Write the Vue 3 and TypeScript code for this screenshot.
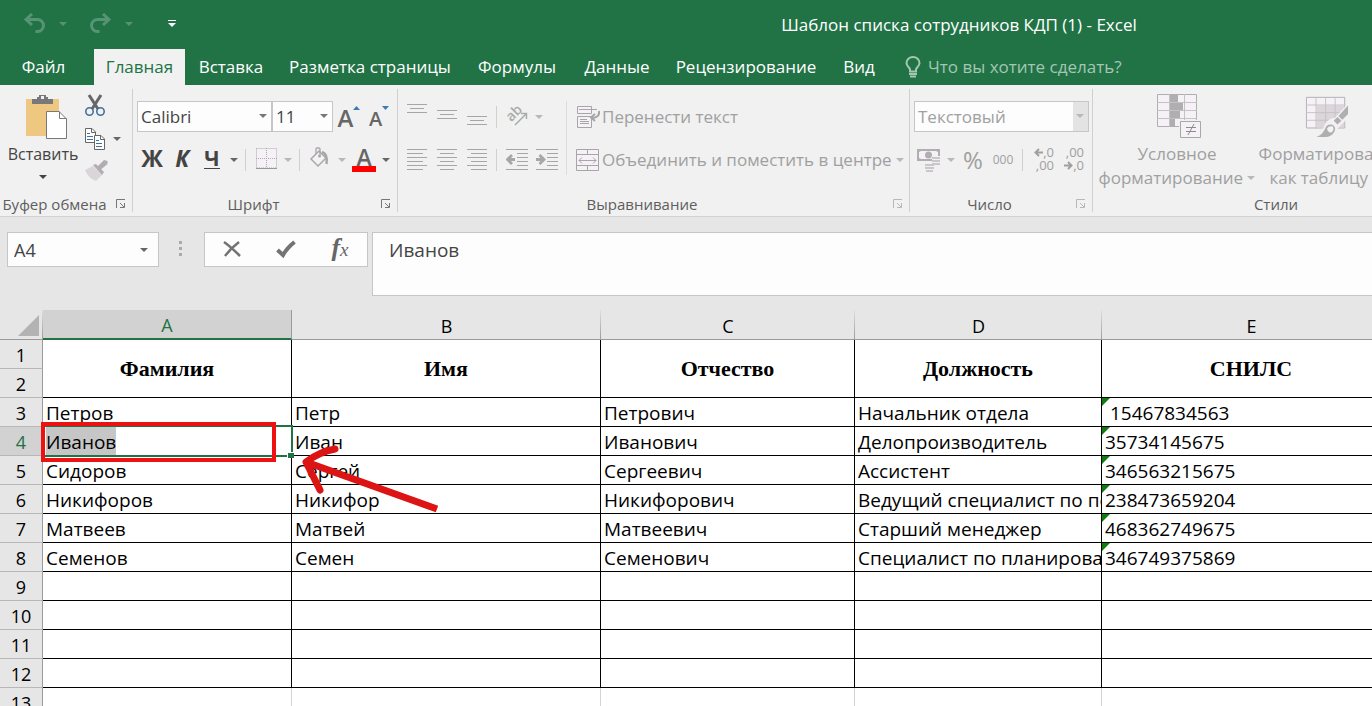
<script setup lang="ts">
import { ref } from 'vue'

interface Column {
  letter: string
  title: string
}
interface SheetRow {
  number: number
  cells: string[]
}

const documentTitle = 'Шаблон списка сотрудников КДП (1) - Excel'
const tabs: string[] = ['Файл', 'Главная', 'Вставка', 'Разметка страницы', 'Формулы', 'Данные', 'Рецензирование', 'Вид']
const activeTab = ref('Главная')
const fontName = ref('Calibri')
const fontSize = ref('11')
const numberFormat = ref('Текстовый')
const cellName = ref('A4')
const formula = ref('Иванов')

const columns: Column[] = [
  { letter: 'A', title: 'Фамилия' },
  { letter: 'B', title: 'Имя' },
  { letter: 'C', title: 'Отчество' },
  { letter: 'D', title: 'Должность' },
  { letter: 'E', title: 'СНИЛС' },
]

const rows: SheetRow[] = [
  { number: 3, cells: ['Петров', 'Петр', 'Петрович', 'Начальник отдела', '\u00a015467834563'] },
  { number: 4, cells: ['Иванов', 'Иван', 'Иванович', 'Делопроизводитель', '35734145675'] },
  { number: 5, cells: ['Сидоров', 'Сергей', 'Сергеевич', 'Ассистент', '346563215675'] },
  { number: 6, cells: ['Никифоров', 'Никифор', 'Никифорович', 'Ведущий специалист по персоналу', '238473659204'] },
  { number: 7, cells: ['Матвеев', 'Матвей', 'Матвеевич', 'Старший менеджер', '468362749675'] },
  { number: 8, cells: ['Семенов', 'Семен', 'Семенович', 'Специалист по планированию', '346749375869'] },
  ...[9, 10, 11, 12, 13].map((number) => ({ number, cells: ['', '', '', '', ''] })),
]

const isActive = (row: number, col: number): boolean => row === 4 && col === 0
const leftLines = [1, 5, 9, 13, 17, 21]
</script>

<template>
  <div class="app">
    <header class="titlebar">
      <div class="quick">
        <button class="quick-btn" aria-label="Отменить">
          <svg width="23" height="21" viewBox="0 0 23 21" fill="none" stroke="currentColor">
            <path d="M3 6.500H14.500a6 6 0 0 1 0 12H12.500" stroke-width="3" />
            <path d="M9 1L3 6.500L9 12" stroke-width="3" />
          </svg>
        </button>
        <button class="quick-arrow" aria-label="Список отмены"><i class="caret"></i></button>
        <button class="quick-btn" aria-label="Повторить">
          <svg width="23" height="21" viewBox="0 0 23 21" fill="none" stroke="currentColor">
            <path d="M20 6.500H8.500a6 6 0 0 0 0 12H10.500" stroke-width="3" />
            <path d="M14 1L20 6.500L14 12" stroke-width="3" />
          </svg>
        </button>
        <button class="quick-arrow" aria-label="Список повтора"><i class="caret"></i></button>
        <button class="quick-more" aria-label="Настройка панели">
          <svg width="8" height="8" viewBox="0 0 8 8" fill="currentColor">
            <path d="M0 0H8V1H0zM0 3H8L4 7z" />
          </svg>
        </button>
      </div>
      <h1>{{ documentTitle }}</h1>
    </header>

    <nav class="tabs">
      <button v-for="tab in tabs" :key="tab" class="tab" :class="{ active: tab === activeTab }" @click="activeTab = tab">
        {{ tab }}
      </button>
      <label class="tell-me">
        <svg width="16" height="22" viewBox="0 0 16 22" fill="none" stroke="currentColor" stroke-width="2">
          <path d="M5 15.500V13.500C5 11.500 1.500 10.500 1.500 7A6.500 6 0 0 1 14.500 7C14.500 10.500 11 11.500 11 13.500V15.500z" />
          <path d="M4 18H12M5 20.500H11" />
        </svg>
        <input type="text" placeholder="Что вы хотите сделать?" aria-label="Что вы хотите сделать?" />
      </label>
    </nav>

    <section class="ribbon">
      <div class="group clipboard">
        <div class="group-body">
          <button class="paste">
            <svg width="42" height="46" viewBox="0 0 42 46">
              <path d="M0 5H33V42H0z" fill="#eec881" />
              <path d="M6 10V5H11V3H13V1H20V3H22V5H27V10z" fill="#787878" />
              <path d="M15 2H18V5H15z" fill="#f1f1f1" />
              <path d="M20.500 17.500H33L40.500 25V44.500H20.500z" fill="#fff" stroke="#787878" />
              <path d="M33.500 17.500V24.500H40.500" fill="none" stroke="#787878" />
            </svg>
            <span>Вставить</span>
            <i class="caret"></i>
          </button>
          <div class="clip-tools">
            <button class="icon-btn" aria-label="Вырезать">
              <svg width="20" height="24" viewBox="0 0 20 24" fill="none">
                <path d="M4 1L13 15M16 1L7 15" stroke="#666" stroke-width="3" />
                <circle cx="4.500" cy="17.500" r="3.700" stroke="#41719c" stroke-width="1.600" />
                <circle cx="15.500" cy="17.500" r="3.700" stroke="#41719c" stroke-width="1.600" />
              </svg>
            </button>
            <div class="copy">
              <button class="icon-btn" aria-label="Копировать">
                <svg width="20" height="22" viewBox="0 0 20 22" fill="#fff" stroke="#666">
                  <path d="M.5.500H7L10.500 4V14.500H.5z" />
                  <path d="M6.500.500V4.500H10.500" fill="none" />
                  <path d="M2 5.500H5M2 8.500H8M2 11.500H8" stroke="#41719c" />
                  <path d="M9.500 7.500H16L19.500 11V21.500H9.500z" />
                  <path d="M15.500 7.500V11.500H19.500" fill="none" />
                  <path d="M11 12.500H14M11 15.500H17M11 18.500H17" stroke="#41719c" />
                </svg>
              </button>
              <button class="arrow-btn" aria-label="Варианты копирования"><i class="caret"></i></button>
            </div>
            <button class="icon-btn" aria-label="Формат по образцу">
              <svg width="24" height="22" viewBox="0 0 24 22">
                <path d="M0 10L8 6L17 15L11 21Q3 18 0 10z" fill="#d9d5d9" />
                <path d="M8 5L11 4L19 12L17 15zM13 6L19 0L22.500 1V4L16 9.500z" fill="#b0aeb0" />
              </svg>
            </button>
          </div>
        </div>
        <footer><span>Буфер обмена</span>
          <button class="launcher" aria-label="Параметры буфера обмена">
            <svg width="10" height="10" viewBox="0 0 10 10" fill="none" stroke="currentColor"><path d="M.5 9V.5H9M4 4L8 8M8.500 4V8.500H4" /></svg>
          </button>
        </footer>
      </div>

      <div class="group font">
        <div class="group-body">
          <div class="row">
            <span class="combo name"><select v-model="fontName" aria-label="Шрифт"><option>Calibri</option></select><i class="caret"></i></span>
            <span class="combo size"><select v-model="fontSize" aria-label="Размер шрифта"><option>11</option></select><i class="caret"></i></span>
            <button class="btn grow" aria-label="Увеличить размер шрифта"><b>A</b><svg width="7" height="4" viewBox="0 0 7 4"><path d="M0 4L3.500 0L7 4z" fill="#3f7ab5" /></svg></button>
            <button class="btn shrink" aria-label="Уменьшить размер шрифта"><b>A</b><svg width="7" height="4" viewBox="0 0 7 4"><path d="M0 0L3.500 4L7 0z" fill="#3f7ab5" /></svg></button>
          </div>
          <div class="row">
            <button class="btn style">Ж</button>
            <button class="btn style italic">К</button>
            <button class="btn style under"><span>Ч</span></button>
            <button class="arrow-btn" aria-label="Вид подчёркивания"><i class="caret"></i></button>
            <i class="sep"></i>
            <button class="btn" aria-label="Границы">
              <svg width="21" height="24" viewBox="0 0 21 24" fill="#f6f1f6" stroke="#aaa">
                <path d="M.5.500H20.500V20H.5zM10.500 0V20M0 10.500H21" stroke-dasharray="1 1" />
                <path d="M0 20.500H21" stroke="#999" />
              </svg>
            </button>
            <button class="arrow-btn dim" aria-label="Виды границ"><i class="caret"></i></button>
            <i class="sep"></i>
            <button class="btn" aria-label="Цвет заливки">
              <svg width="20" height="25" viewBox="0 0 20 25" fill="none" stroke="#a9a7a9">
                <path d="M1 12L9 4L16 11L8 19z" fill="#f6f1f6" stroke-width="1.500" />
                <path d="M6 7V2Q6 1 7 1H9Q10 1 10 2V9" stroke-width="1.300" />
                <path d="M12 5Q18 7 16.500 17" stroke-width="2.500" />
                <circle cx="9.500" cy="9" r="1.500" fill="#a9a7a9" stroke="none" />
              </svg>
            </button>
            <button class="arrow-btn dim" aria-label="Варианты заливки"><i class="caret"></i></button>
            <button class="btn color" aria-label="Цвет текста"><b>A</b></button>
            <button class="arrow-btn" aria-label="Варианты цвета текста"><i class="caret"></i></button>
          </div>
        </div>
        <footer><span>Шрифт</span>
          <button class="launcher" aria-label="Параметры шрифта">
            <svg width="10" height="10" viewBox="0 0 10 10" fill="none" stroke="currentColor"><path d="M.5 9V.5H9M4 4L8 8M8.500 4V8.500H4" /></svg>
          </button>
        </footer>
      </div>

      <div class="group align">
        <div class="group-body">
          <div class="align-left">
            <div class="row">
              <button class="btn" aria-label="По верхнему краю"><svg width="20" height="28" viewBox="0 0 20 28" stroke="#a6a6a6"><path d="M0 1.500H20M3 5.500H17M0 9.500H20" /></svg></button>
              <button class="btn" aria-label="По середине"><svg width="20" height="28" viewBox="0 0 20 28" stroke="#a6a6a6"><path d="M0 7.500H20M3 11.500H17M0 15.500H20" /></svg></button>
              <button class="btn" aria-label="По нижнему краю"><svg width="20" height="28" viewBox="0 0 20 28" stroke="#a6a6a6"><path d="M0 13.500H20M3 17.500H17M0 21.500H20" /></svg></button>
              <i class="sep"></i>
              <button class="btn" aria-label="Ориентация">
                <svg width="22" height="26" viewBox="0 0 22 26" fill="none" stroke="#aaa">
                  <text x="1" y="16" transform="rotate(-45 6 12)" class="ab">ab</text>
                  <path d="M9 21L20 10M15 9.500H20.500V15" stroke-width="1.500" />
                </svg>
              </button>
              <button class="arrow-btn dim" aria-label="Варианты ориентации"><i class="caret"></i></button>
            </div>
            <div class="row">
              <button class="btn" aria-label="По левому краю">
                <svg width="20" height="24" viewBox="0 0 20 24" fill="#a6a6a6"><rect v-for="(y, i) in leftLines" :key="y" x="0" :y="y" :width="i % 2 ? 16 : 20" height="1" /></svg>
              </button>
              <button class="btn" aria-label="По центру">
                <svg width="20" height="24" viewBox="0 0 20 24" fill="#a6a6a6"><rect v-for="(y, i) in leftLines" :key="y" :x="i % 2 ? 3 : 0" :y="y" :width="i % 2 ? 14 : 20" height="1" /></svg>
              </button>
              <button class="btn" aria-label="По правому краю">
                <svg width="20" height="24" viewBox="0 0 20 24" fill="#a6a6a6"><rect v-for="(y, i) in leftLines" :key="y" :x="i % 2 ? 4 : 0" :y="y" :width="i % 2 ? 16 : 20" height="1" /></svg>
              </button>
              <i class="sep"></i>
              <button class="btn" aria-label="Уменьшить отступ">
                <svg width="23" height="24" viewBox="0 0 23 24" stroke="#a6a6a6" fill="none">
                  <path d="M0 1.500H22M11 5.500H22M11 9.500H22M11 13.500H22M11 17.500H22M0 21.500H22" />
                  <path d="M9 11.500H2M6 7L1.500 11.500L6 16" stroke-width="2.800" />
                </svg>
              </button>
              <button class="btn" aria-label="Увеличить отступ">
                <svg width="23" height="24" viewBox="0 0 23 24" stroke="#a6a6a6" fill="none">
                  <path d="M0 1.500H22M11 5.500H22M11 9.500H22M11 13.500H22M11 17.500H22M0 21.500H22" />
                  <path d="M0 11.500H7M3.500 7L8 11.500L3.500 16" stroke-width="2.800" />
                </svg>
              </button>
            </div>
          </div>
          <i class="tall-sep"></i>
          <div class="align-right">
            <button class="text-btn">
              <svg width="24" height="24" viewBox="0 0 24 24" fill="#f6f1f6" stroke="#a6a6a6">
                <path d="M1.500 1.500H15.500V8.500H1.500zM1.500 11.500H15.500V22.500H1.500z" />
                <path d="M3 4.500H21M4 14.500H11M4 16.500H13M4 18.500H13" />
                <path d="M23 6Q24 13 15 13M19 9L15 12.500L19 16" fill="none" stroke-width="2" />
              </svg>
              <span>Перенести текст</span>
            </button>
            <button class="text-btn">
              <svg width="24" height="24" viewBox="0 0 24 24" fill="#f6f1f6" stroke="#a6a6a6">
                <path d="M.5 1.500H22.500V22.500H.5zM.5 6.500H22.500M.5 17.500H22.500M11.500 1V6M11.500 18V23" />
                <path d="M3 12.500H20M6 9.500L3 12.500L6 15.500M17 9.500L20 12.500L17 15.500" fill="none" />
              </svg>
              <span>Объединить и поместить в центре</span>
              <i class="caret"></i>
            </button>
          </div>
        </div>
        <footer><span>Выравнивание</span>
          <button class="launcher dim" aria-label="Параметры выравнивания">
            <svg width="10" height="10" viewBox="0 0 10 10" fill="none" stroke="currentColor"><path d="M.5 9V.5H9M4 4L8 8M8.500 4V8.500H4" /></svg>
          </button>
        </footer>
      </div>

      <div class="group number">
        <div class="group-body">
          <div class="row">
            <span class="combo format"><select v-model="numberFormat" aria-label="Числовой формат"><option>Текстовый</option></select><i class="caret"></i></span>
          </div>
          <div class="row">
            <button class="btn" aria-label="Финансовый формат">
              <svg width="24" height="24" viewBox="0 0 24 24">
                <path d="M0 1H23V13H0z" fill="#b0aeb0" />
                <path d="M2 4L4 3H19L21 4V10L19 11H4L2 10z" fill="#f6f1f6" />
                <circle cx="11.500" cy="7" r="3.500" fill="#b0aeb0" />
                <path d="M15 8H23V17H17V22H8V14H15z" fill="#f1f1f1" />
                <path d="M15 10H23M15 13H23M15 16H23M8 17H17M8 20H17M9 23H16" stroke="#cbc6cb" stroke-width="2" />
              </svg>
            </button>
            <button class="arrow-btn dim" aria-label="Валюты"><i class="caret"></i></button>
            <button class="btn percent">%</button>
            <button class="btn thousands">000</button>
            <i class="sep"></i>
            <button class="btn decimals" aria-label="Увеличить разрядность">
              <span><svg width="9" height="9" viewBox="0 0 9 9" fill="none" stroke="#a0a0a0" stroke-width="2"><path d="M9 4.500H1.500M5 1L1.500 4.500L5 8" /></svg>,0</span><span>,00</span>
            </button>
            <button class="btn decimals" aria-label="Уменьшить разрядность">
              <span>,00</span><span><svg width="9" height="9" viewBox="0 0 9 9" fill="none" stroke="#a0a0a0" stroke-width="2"><path d="M0 4.500H7.500M4 1L7.500 4.500L4 8" /></svg>,0</span>
            </button>
          </div>
        </div>
        <footer><span>Число</span>
          <button class="launcher dim" aria-label="Параметры числа">
            <svg width="10" height="10" viewBox="0 0 10 10" fill="none" stroke="currentColor"><path d="M.5 9V.5H9M4 4L8 8M8.500 4V8.500H4" /></svg>
          </button>
        </footer>
      </div>

      <div class="group styles">
        <div class="group-body">
          <button class="big-btn">
            <svg width="44" height="44" viewBox="0 0 44 44">
              <path d="M.5.500H39.500V32.500H.5z" fill="#f6f1f6" stroke="#b0aeb0" />
              <path d="M0 8.500H40M0 16.500H40M0 24.500H40M12.500 0V33M27.500 0V33" stroke="#c4c2c4" />
              <path d="M13 1H21V8H13zM13 9H26V16H13zM13 17H23V24H13zM13 25H18V32H13z" fill="#b0aeb0" />
              <path d="M22 26H44V44H22z" fill="#f1f1f1" />
              <path d="M23.500 27.500H43.500V43.500H23.500z" fill="#f6f1f6" stroke="#a9a7a9" />
              <path d="M29 33.500H39M29 37.500H39M37 30L31 41" stroke="#8c8c8c" />
            </svg>
            <span>Условное<br />форматирование <i class="caret"></i></span>
          </button>
          <button class="big-btn table-style">
            <svg width="44" height="46" viewBox="0 0 44 46">
              <path d="M.5 3.500H40.500V35.500H.5z" fill="#f6f1f6" stroke="#b0aeb0" />
              <path d="M11 12H40V35H11z" fill="#dcd6dc" />
              <path d="M0 11.500H41M0 19.500H41M0 27.500H41M10.500 3V36M20.500 3V36M30.500 3V36" stroke="#c4c2c4" />
              <path d="M44 10L30 25Q24 25 20 31Q17 40 9 43V46H22Q32 44 33 36L44 25z" fill="#f1f1f1" />
              <path d="M44 12V21L38 27L34 23zM33 24L37 28L33 32L29 28zM11 45Q18 42 20 36Q22 31 27 32Q32 34 30 39Q27 45 20 45z" fill="#b0aeb0" />
              <path d="M22 36Q24 33 28 34Q30 37 27 40Q23 41 22 36z" fill="#f6f1f6" />
            </svg>
            <span>Форматировать<br />как таблицу <i class="caret"></i></span>
          </button>
        </div>
        <footer><span>Стили</span></footer>
      </div>
    </section>

    <section class="formula-bar">
      <div class="name-box">
        <input v-model="cellName" type="text" aria-label="Имя ячейки" />
        <button class="arrow-btn" aria-label="Список имён"><i class="caret"></i></button>
      </div>
      <div class="dots"><i></i><i></i><i></i></div>
      <div class="entry">
        <button aria-label="Отмена">
          <svg width="18" height="20" viewBox="0 0 18 20" fill="none" stroke="#737373"><path d="M1 2Q8 7 17 16M16 2Q8 8 2 16" stroke-width="2.500" /></svg>
        </button>
        <button aria-label="Ввод">
          <svg width="20" height="20" viewBox="0 0 20 20" fill="none" stroke="#737373"><path d="M1.500 10L7 15Q11 8 18.500 2" stroke-width="4" /></svg>
        </button>
        <button class="fx" aria-label="Вставить функцию">f<small>x</small></button>
      </div>
      <textarea v-model="formula" aria-label="Строка формул"></textarea>
    </section>

    <main class="sheet">
      <table>
        <colgroup>
          <col class="c-num" /><col class="c-a" /><col class="c-b" /><col class="c-c" /><col class="c-d" /><col class="c-e" />
        </colgroup>
        <thead>
          <tr>
            <th class="corner"><svg width="21" height="21" viewBox="0 0 21 21"><path d="M21 0V21H0z" fill="#b3b3b3" /></svg></th>
            <th v-for="(c, i) in columns" :key="c.letter" scope="col" class="letter" :class="{ current: i === 0 }">{{ c.letter }}</th>
          </tr>
        </thead>
        <tbody>
          <tr>
            <th scope="row" class="num">1</th>
            <td v-for="c in columns" :key="c.letter" rowspan="2" class="title">{{ c.title }}</td>
          </tr>
          <tr><th scope="row" class="num">2</th></tr>
          <tr v-for="r in rows" :key="r.number" :class="{ plain: r.number > 12 }">
            <th scope="row" class="num" :class="{ current: r.number === 4 }">{{ r.number }}</th>
            <td v-for="(text, i) in r.cells" :key="i" :class="{ active: isActive(r.number, i), flagged: i === 4 && text }">
              <template v-if="isActive(r.number, i)">
                <mark>{{ text }}</mark>
                <i class="selection"></i>
                <i class="handle"></i>
                <i class="frame"></i>
                <svg class="pointer" width="140" height="72" viewBox="0 0 140 72" fill="none" stroke="#dd1414">
                  <path d="M7 20L138 67" stroke-width="7" />
                  <path d="M36 7Q20 10 7 20L21 48" stroke-width="7" stroke-linecap="round" stroke-linejoin="round" />
                </svg>
              </template>
              <template v-else>{{ text }}</template>
            </td>
          </tr>
        </tbody>
      </table>
    </main>
  </div>
</template>

<style>
html,
body {
  margin: 0;
  overflow: hidden;
}
</style>

<style scoped>
* {
  box-sizing: border-box;
}
.app {
  display: flex;
  flex-direction: column;
  height: 100vh;
  overflow: hidden;
  background: #e6e6e6;
  color: #444;
  font-family: 'Open Sans', 'Noto Sans', sans-serif;
  font-size: 17px;
}
button,
input,
select,
textarea {
  margin: 0;
  padding: 0;
  border: 0;
  border-radius: 0;
  outline: 0;
  background: none;
  color: inherit;
  font: inherit;
}
svg {
  display: block;
  flex: none;
}
.caret {
  display: inline-block;
  flex: none;
  width: 0;
  height: 0;
  border: 4px solid transparent;
  border-top-color: currentColor;
  border-bottom-width: 0;
}

.titlebar {
  display: flex;
  align-items: center;
  flex: none;
  height: 49px;
  background: #217346;
  color: #fff;
}
.quick {
  display: flex;
  align-items: center;
  flex: none;
  width: 546px;
  padding: 0 0 2px 23px;
  color: #579473;
}
.quick-btn {
  width: 24px;
}
.quick-arrow {
  display: flex;
  justify-content: center;
  width: 42px;
  padding-right: 10px;
}
.quick-more {
  margin-left: 13px;
  color: #fff;
}
h1 {
  flex: 1;
  margin: 0;
  font-size: 17px;
  font-weight: 400;
  text-align: center;
  white-space: nowrap;
}

.tabs {
  display: grid;
  grid-template-columns: 87px 91px 92px 186px 108px 92px 166px 60px 1fr;
  flex: none;
  height: 36px;
  padding-left: 7px;
  background: #217346;
  color: #fff;
}
.tab {
  padding-bottom: 2px;
  white-space: nowrap;
}
.tab:first-child {
  padding-right: 14px;
}
.tab.active {
  background: #f1f1f1;
  color: #217346;
}
.tell-me {
  display: flex;
  align-items: center;
  gap: 7px;
  padding: 0 0 2px 16px;
  color: #a3c7b3;
}
.tell-me svg {
  margin-top: 2px;
}
.tell-me input {
  flex: 1;
  min-width: 0;
}
.tell-me input::placeholder {
  color: inherit;
  opacity: 1;
}

.ribbon {
  display: flex;
  flex: none;
  padding: 4px 0;
  overflow: hidden;
  border-bottom: 1px solid #d2d2d2;
  background: #f1f1f1;
}
.group {
  display: flex;
  flex-direction: column;
  flex: none;
  height: 123px;
  border-right: 1px solid #d0d0d0;
}
.group-body {
  display: flex;
  flex: 1;
  flex-direction: column;
  gap: 12px;
  padding: 12px 4px 0;
}
.group footer {
  display: flex;
  align-items: center;
  height: 20px;
  margin-bottom: -2px;
  color: #5e5e5e;
  font-size: 15px;
  line-height: 18px;
}
.group footer span {
  flex: 1;
  padding-left: 1px;
  text-align: center;
  white-space: nowrap;
}
.launcher {
  display: flex;
  justify-content: center;
  width: 24px;
  padding-left: 2px;
  color: #777;
}
.launcher.dim,
.dim {
  color: #b8b8b8;
}
.row {
  display: flex;
  align-items: center;
  height: 31px;
}
.btn,
.arrow-btn,
.icon-btn {
  display: flex;
  align-items: center;
  justify-content: center;
  flex: none;
}
.btn {
  width: 30px;
  height: 31px;
}
.arrow-btn {
  width: 14px;
  height: 30px;
  color: #666;
}
.arrow-btn.dim {
  color: #b8b8b8;
}
.sep {
  flex: none;
  width: 1px;
  height: 22px;
  margin: 0 5px 0 4px;
  background: #d0d0d0;
}

.clipboard {
  width: 133px;
}
.clipboard .group-body {
  flex-direction: row;
  gap: 5px;
  padding: 5px 0 0 6px;
}
.paste {
  display: flex;
  flex-direction: column;
  align-items: center;
  flex: none;
  width: 74px;
  height: 92px;
  font-size: 16px;
  line-height: 24px;
}
.paste svg {
  margin: 0 0 2px 8px;
}
.paste .caret {
  margin-top: 9px;
}
.clip-tools {
  display: flex;
  flex-direction: column;
  align-items: flex-start;
  gap: 10px;
}
.copy {
  display: flex;
  gap: 5px;
}
.copy .arrow-btn {
  height: 22px;
}

.font {
  width: 265px;
}
.combo {
  position: relative;
  flex: none;
  border: 1px solid #c6c6c6;
  background: #fdfdfd;
}
.combo select {
  width: 100%;
  height: 29px;
  padding-left: 3px;
  appearance: none;
}
.combo .caret {
  position: absolute;
  top: 12px;
  right: 4px;
  color: #777;
  pointer-events: none;
}
.name {
  width: 135px;
}
.size {
  width: 61px;
}
.format {
  width: 175px;
  background: linear-gradient(to left, #e3e3e3 15px, #fdfdfd 15px);
  color: #a0a0a0;
}
.format .caret {
  color: #b8b8b8;
}
.grow,
.shrink {
  align-items: flex-start;
  padding: 2px 0 0 2px;
  color: #666;
}
.grow b,
.shrink b {
  font-weight: 600;
  font-size: 24px;
  line-height: 30px;
}
.shrink b {
  font-size: 20px;
  line-height: 32px;
}
.grow svg,
.shrink svg {
  margin-top: 3px;
}
.style {
  padding-bottom: 4px;
  font-size: 23px;
  font-weight: 700;
  line-height: 24px;
}
.italic {
  font-style: italic;
}
.under span {
  height: 22px;
  border-bottom: 1px solid #444;
  font-size: 21px;
  line-height: 22px;
}
.color b {
  width: 24px;
  height: 24px;
  border-bottom: 6px solid #f00;
  color: #666;
  font-size: 23px;
  font-weight: 600;
  line-height: 18px;
}

.align {
  width: 512px;
}
.align .group-body {
  flex-direction: row;
  gap: 4px;
}
.align-left,
.align-right {
  display: flex;
  flex-direction: column;
  gap: 12px;
}
.tall-sep {
  width: 1px;
  height: 74px;
  background: #dcdcdc;
}
.text-btn {
  display: flex;
  align-items: center;
  gap: 2px;
  height: 31px;
  padding-left: 5px;
  color: #a0a0a0;
  white-space: nowrap;
}
.text-btn .caret {
  margin-left: 2px;
  color: #b8b8b8;
}
.ab {
  fill: #aaa;
  stroke: none;
  font-size: 14px;
  font-weight: 600;
}

.number {
  width: 183px;
}
.percent {
  color: #a0a0a0;
  font-size: 24px;
}
.thousands {
  color: #a0a0a0;
  font-size: 12px;
}
.decimals {
  flex-direction: column;
  align-items: flex-end;
  padding: 0 4px 2px 0;
  color: #a0a0a0;
  font-size: 13px;
  line-height: 13px;
}
.decimals span {
  display: flex;
  align-items: center;
}

.styles {
  width: 366px;
}
.styles .group-body {
  flex-direction: row;
  gap: 0;
  padding: 5px 4px 0;
}
.big-btn {
  display: flex;
  flex-direction: column;
  align-items: center;
  flex: none;
  gap: 4px;
  width: 160px;
  color: #a0a0a0;
  line-height: 24px;
  white-space: nowrap;
}
.big-btn svg {
  height: 44px;
  margin-left: 4px;
}
.table-style {
  width: 136px;
}
.big-btn .caret {
  margin-bottom: 4px;
  color: #b8b8b8;
}

.formula-bar {
  display: flex;
  align-items: flex-start;
  flex: none;
  padding: 15px 0 14px 7px;
}
.name-box,
.entry {
  display: flex;
  align-items: center;
  flex: none;
  height: 35px;
  border: 1px solid #c6c6c6;
  background: #fdfdfd;
}
.name-box {
  width: 152px;
  padding: 0 7px 0 6px;
  font-size: 18px;
}
.name-box input {
  flex: 1;
  min-width: 0;
}
.dots {
  display: flex;
  flex-direction: column;
  gap: 3px;
  margin: 9px 22px 0 20px;
}
.dots i {
  width: 3px;
  height: 3px;
  background: #aaa;
}
.entry {
  width: 164px;
}
.entry button {
  display: flex;
  align-items: center;
  justify-content: center;
  flex: 1;
}
.entry .fx {
  padding-bottom: 4px;
  color: #666;
  font: italic 700 26px / 28px 'Liberation Serif', serif;
}
.fx small {
  padding-top: 4px;
  font-size: 19px;
  font-weight: 400;
}
.formula-bar textarea {
  flex: 1;
  min-width: 0;
  height: 64px;
  margin-left: 4px;
  padding: 4px 16px;
  border: 1px solid #c6c6c6;
  border-right: 0;
  background: #fdfdfd;
  font-size: 19px;
  line-height: 26px;
  resize: none;
}

.sheet {
  flex: 1;
  min-height: 0;
  overflow: hidden;
  color: #000;
  font-size: 19px;
}
table {
  width: 1401px;
  border-spacing: 0;
  table-layout: fixed;
}
.c-num {
  width: 43px;
}
.c-a {
  width: 249px;
}
.c-b {
  width: 309px;
}
.c-c {
  width: 254px;
}
.c-d {
  width: 247px;
}
.c-e {
  width: 299px;
}
th,
td {
  height: 29px;
  padding: 2px 0 0;
  font-weight: 400;
  line-height: 26px;
}
.corner,
.letter {
  height: 30px;
  border-bottom: 1px solid #9b9b9b;
  background: linear-gradient(#e0e0e0, #9b9b9b) right / 1px 100% no-repeat;
  font-size: 18px;
}
.corner svg {
  margin-left: 18px;
}
.letter.current {
  padding-top: 3px;
  border-right: 1px solid #9b9b9b;
  border-bottom: 2px solid #217346;
  background: #d2d2d2;
  color: #217346;
  line-height: 25px;
}
.num {
  border-right: 1px solid #9b9b9b;
  border-bottom: 1px solid #b8b8b8;
  background: #e6e6e6;
  font-size: 18px;
}
.num.current {
  background: #d2d2d2;
  color: #217346;
}
td {
  position: relative;
  padding-left: 3px;
  overflow: hidden;
  border-right: 1px solid #000;
  border-bottom: 1px solid #000;
  background: #fff;
  white-space: nowrap;
}
.plain td {
  border-color: #d4d4d4;
}
.title {
  padding: 0;
  font-family: 'Liberation Serif', serif;
  font-size: 22px;
  font-weight: 700;
  text-align: center;
}
.flagged::before {
  position: absolute;
  top: 0;
  left: 0;
  border: 4px solid transparent;
  border-top-color: #107c10;
  border-left-color: #107c10;
  content: '';
}
td.active {
  z-index: 1;
  padding-top: 0;
  overflow: visible;
}
mark {
  display: inline-block;
  height: 28px;
  padding-top: 2px;
  background: #c6c6c6;
  color: inherit;
  vertical-align: top;
}
.selection,
.handle,
.frame,
.pointer {
  position: absolute;
  pointer-events: none;
}
.selection {
  inset: -2px;
  border: 2px solid #217346;
}
.handle {
  right: -3px;
  bottom: -3px;
  width: 7px;
  height: 6px;
  border: solid #fff;
  border-width: 1px 0 0 1px;
  background: #217346;
}
.frame {
  top: -5px;
  right: 15px;
  bottom: -7px;
  left: -2px;
  border: 4px solid #ee1111;
}
.pointer {
  top: 15px;
  left: 256px;
}
</style>
